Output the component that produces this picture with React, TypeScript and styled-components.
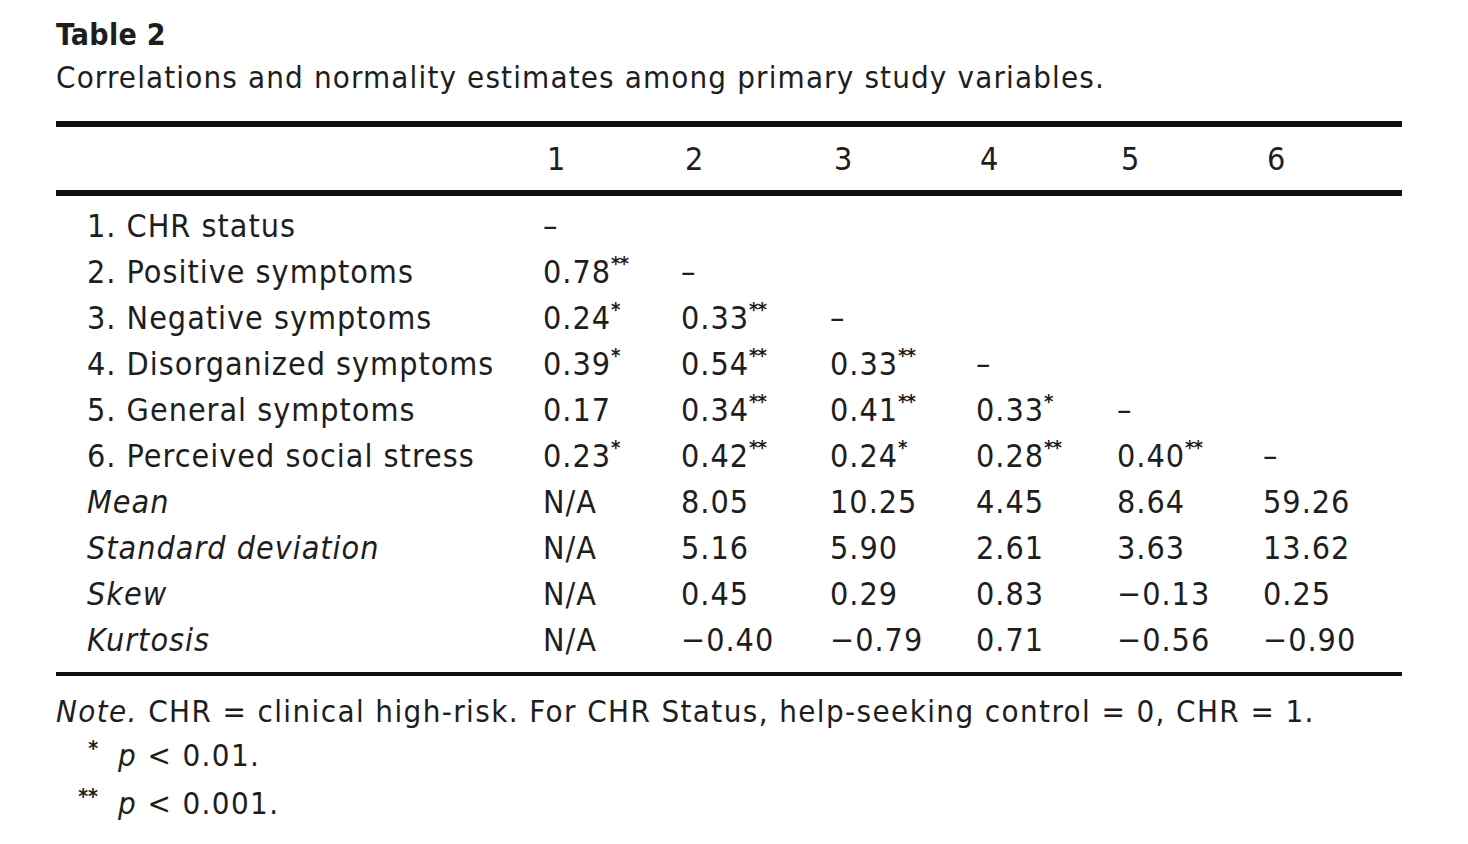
import React from 'react'
import styled, { createGlobalStyle } from 'styled-components'

const GlobalStyle = createGlobalStyle`
  html, body {
    margin: 0;
    padding: 0;
    background: #fff;
  }
  body {
    font-family: 'DejaVu Sans', 'Liberation Sans', sans-serif;
    font-stretch: condensed;
    color: #1e1e1e;
  }
`

const Page = styled.div`
  width: 1468px;
  height: 844px;
  padding: 16px 0 0 56px;
  box-sizing: border-box;
`
const Title = styled.div`
  font-weight: bold;
  font-size: 30px;
  line-height: 38px;
  letter-spacing: 0.3px;
`
const Caption = styled.div`
  font-size: 31px;
  line-height: 46px;
  letter-spacing: 1.15px;
`
const Table = styled.div`
  width: 1346px;
  margin-top: 21px;
  border-top: 6px solid #111;
  border-bottom: 4px solid #111;
`
const Grid = styled.div`
  display: grid;
  grid-template-columns: 487px 138px 149px 146px 141px 146px 139px;
  grid-auto-rows: 46px;
  align-items: center;
  font-size: 32px;
  letter-spacing: 1px;
`
const Head = styled(Grid)`
  height: 63px;
  grid-auto-rows: 63px;
  border-bottom: 6px solid #111;
`
const Body = styled(Grid)`
  padding: 7px 0 9px;
`
const Label = styled.div<{ $italic?: boolean }>`
  padding-left: 31px;
  font-style: ${(p) => (p.$italic ? 'italic' : 'normal')};
  white-space: nowrap;
`
const Cell = styled.div`
  white-space: nowrap;
`
const HeadCell = styled(Cell)`
  padding-left: 4px;
`
const Stars = styled.sup`
  font-size: 20px;
  font-weight: bold;
  vertical-align: 13px;
  line-height: 0;
  letter-spacing: -1px;
`
const Notes = styled.div`
  font-size: 31px;
  letter-spacing: 1.4px;
  padding-top: 13px;
`
const NoteLine = styled.div`
  line-height: 44px;
`
const FootLine = styled.div`
  display: flex;
  align-items: baseline;
  line-height: 44px;
`
const FootMark = styled.span`
  width: 62px;
  text-align: right;
  padding-right: 20px;
  box-sizing: border-box;
  font-size: 21px;
  font-weight: bold;
  letter-spacing: 0;
  position: relative;
  top: -10px;
`
const Em = styled.i``

type Value = string | [string, number]

const rows: { label: string; italic?: boolean; cells: Value[] }[] = [
  { label: '1. CHR status', cells: ['–'] },
  { label: '2. Positive symptoms', cells: [['0.78', 2], '–'] },
  { label: '3. Negative symptoms', cells: [['0.24', 1], ['0.33', 2], '–'] },
  { label: '4. Disorganized symptoms', cells: [['0.39', 1], ['0.54', 2], ['0.33', 2], '–'] },
  { label: '5. General symptoms', cells: ['0.17', ['0.34', 2], ['0.41', 2], ['0.33', 1], '–'] },
  {
    label: '6. Perceived social stress',
    cells: [['0.23', 1], ['0.42', 2], ['0.24', 1], ['0.28', 2], ['0.40', 2], '–'],
  },
  { label: 'Mean', italic: true, cells: ['N/A', '8.05', '10.25', '4.45', '8.64', '59.26'] },
  { label: 'Standard deviation', italic: true, cells: ['N/A', '5.16', '5.90', '2.61', '3.63', '13.62'] },
  { label: 'Skew', italic: true, cells: ['N/A', '0.45', '0.29', '0.83', '−0.13', '0.25'] },
  { label: 'Kurtosis', italic: true, cells: ['N/A', '−0.40', '−0.79', '0.71', '−0.56', '−0.90'] },
]

const renderValue = (v: Value) => {
  if (typeof v === 'string') return v
  const [num, n] = v
  return (
    <>
      {num}
      <Stars>{'*'.repeat(n)}</Stars>
    </>
  )
}

export default function App() {
  return (
    <Page>
      <GlobalStyle />
      <Title>Table 2</Title>
      <Caption>Correlations and normality estimates among primary study variables.</Caption>
      <Table>
        <Head>
          <Label />
          {[1, 2, 3, 4, 5, 6].map((n) => (
            <HeadCell key={n}>{n}</HeadCell>
          ))}
        </Head>
        <Body>
          {rows.map((row) => (
            <React.Fragment key={row.label}>
              <Label $italic={row.italic}>{row.label}</Label>
              {[0, 1, 2, 3, 4, 5].map((i) => (
                <Cell key={i}>{row.cells[i] !== undefined ? renderValue(row.cells[i]) : null}</Cell>
              ))}
            </React.Fragment>
          ))}
        </Body>
      </Table>
      <Notes>
        <NoteLine>
          <Em>Note.</Em> CHR = clinical high-risk. For CHR Status, help-seeking control = 0, CHR = 1.
        </NoteLine>
        <FootLine>
          <FootMark>*</FootMark>
          <span>
            <Em>p</Em> &lt; 0.01.
          </span>
        </FootLine>
        <FootLine>
          <FootMark>**</FootMark>
          <span>
            <Em>p</Em> &lt; 0.001.
          </span>
        </FootLine>
      </Notes>
    </Page>
  )
}
